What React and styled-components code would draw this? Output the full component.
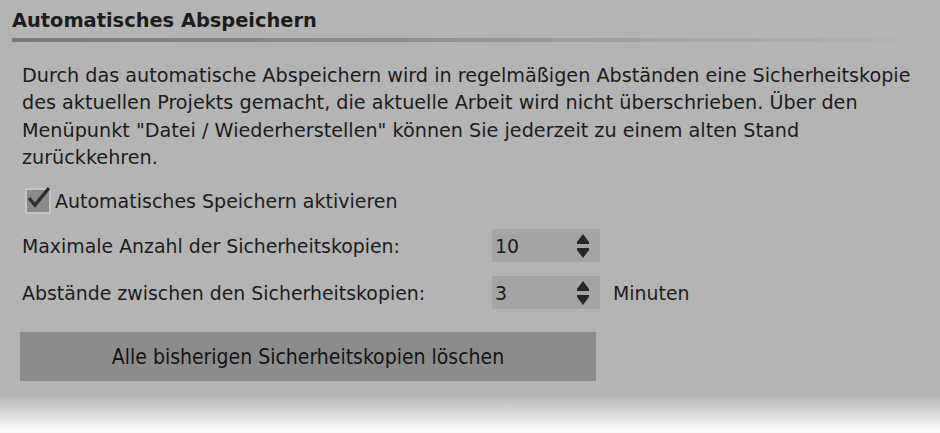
import styled, { createGlobalStyle } from 'styled-components'

const GlobalStyle = createGlobalStyle`
  html, body {
    margin: 0;
    padding: 0;
    background: #b4b4b4;
  }
  body {
    font-family: "DejaVu Sans", Verdana, sans-serif;
    color: #1c1c1c;
  }
`

const lines = [
  'Durch das automatische Abspeichern wird in regelmäßigen Abständen eine Sicherheitskopie',
  'des aktuellen Projekts gemacht, die aktuelle Arbeit wird nicht überschrieben. Über den',
  'Menüpunkt "Datei / Wiederherstellen" können Sie jederzeit zu einem alten Stand',
  'zurückkehren.'
]

export default function App () {
  return (
    <>
      <GlobalStyle />
      <Page>
        <Section>
          <Title>Automatisches Abspeichern</Title>
          <Rule />
          <Body>
            <Description>
              {lines.map((line, i) => <Line key={i}>{line}</Line>)}
            </Description>
            <CheckRow>
              <CheckBox>
                <svg width='28' height='26' viewBox='0 0 28 26'>
                  <path d='M4 14 L10 21 L24 4' fill='none' stroke='#2e2e2e' strokeWidth='3.4' strokeLinejoin='miter' />
                </svg>
              </CheckBox>
              Automatisches Speichern aktivieren
            </CheckRow>
            <Grid>
              <Label>Maximale Anzahl der Sicherheitskopien:</Label>
              <Spin value='10' />
              <span />
              <Label>Abstände zwischen den Sicherheitskopien:</Label>
              <Spin value='3' />
              <Label>Minuten</Label>
            </Grid>
            <Button>Alle bisherigen Sicherheitskopien löschen</Button>
          </Body>
        </Section>
        <Fade />
      </Page>
    </>
  )
}

function Spin ({ value }) {
  return (
    <SpinBox>
      <SpinValue>{value}</SpinValue>
      <svg width='16' height='26' viewBox='0 0 16 26'>
        <path d='M8 1 L14 9 L14 11 L2 11 L2 9 Z' fill='#262626' />
        <path d='M8 25 L14 17 L14 15 L2 15 L2 17 Z' fill='#262626' />
      </svg>
    </SpinBox>
  )
}

const Page = styled.div`
  width: 940px;
  height: 433px;
  display: flex;
  flex-direction: column;
  overflow: hidden;
`

const Section = styled.div`
  padding: 9px 12px 0;
  display: flex;
  flex-direction: column;
`

const Title = styled.div`
  font-weight: bold;
  font-size: 19.4px;
  line-height: 24px;
`

const Rule = styled.div`
  height: 4px;
  margin-top: 5px;
  width: 915px;
  background: linear-gradient(to right, #7a7a7a 0%, #8e8e8e 40%, #b4b4b4 100%);
`

const Body = styled.div`
  padding: 0 0 0 10px;
  display: flex;
  flex-direction: column;
`

const Description = styled.div`
  margin-top: 20px;
  font-size: 19.2px;
  line-height: 27.3px;
`

const Line = styled.div`
  white-space: nowrap;
`

const CheckRow = styled.div`
  display: flex;
  align-items: center;
  gap: 4px;
  margin-top: 15px;
  font-size: 19px;
  height: 30px;
`

const CheckBox = styled.div`
  position: relative;
  width: 22px;
  height: 22px;
  margin-left: 3px;
  background: #8a8a8a;
  border: 2px solid #c4c4c4;
  svg {
    position: absolute;
    left: -2px;
    top: -6px;
  }
`

const Grid = styled.div`
  display: grid;
  grid-template-columns: 457px 108px auto;
  column-gap: 13px;
  row-gap: 14px;
  align-items: center;
  margin-top: 13px;
`

const Label = styled.span`
  font-size: 18.9px;
`

const SpinBox = styled.div`
  height: 33px;
  background: #a4a4a4;
  display: flex;
  align-items: center;
  justify-content: space-between;
  padding: 0 9px 0 3px;
  box-sizing: border-box;
`

const SpinValue = styled.span`
  font-size: 18.9px;
`

const Button = styled.div`
  margin-top: 23px;
  margin-left: -2px;
  width: 576px;
  height: 49px;
  background: #8c8c8c;
  display: flex;
  align-items: center;
  justify-content: center;
  font-family: "DejaVu Sans Condensed", "Liberation Sans Narrow", "DejaVu Sans", sans-serif;
  font-size: 21px;
  color: #141414;
`

const Fade = styled.div`
  flex: 1;
  margin-top: 14px;
  background: linear-gradient(to bottom, #b4b4b4 0%, #d8d8d8 45%, #f6f6f6 85%, #fbfbfb 100%);
`
